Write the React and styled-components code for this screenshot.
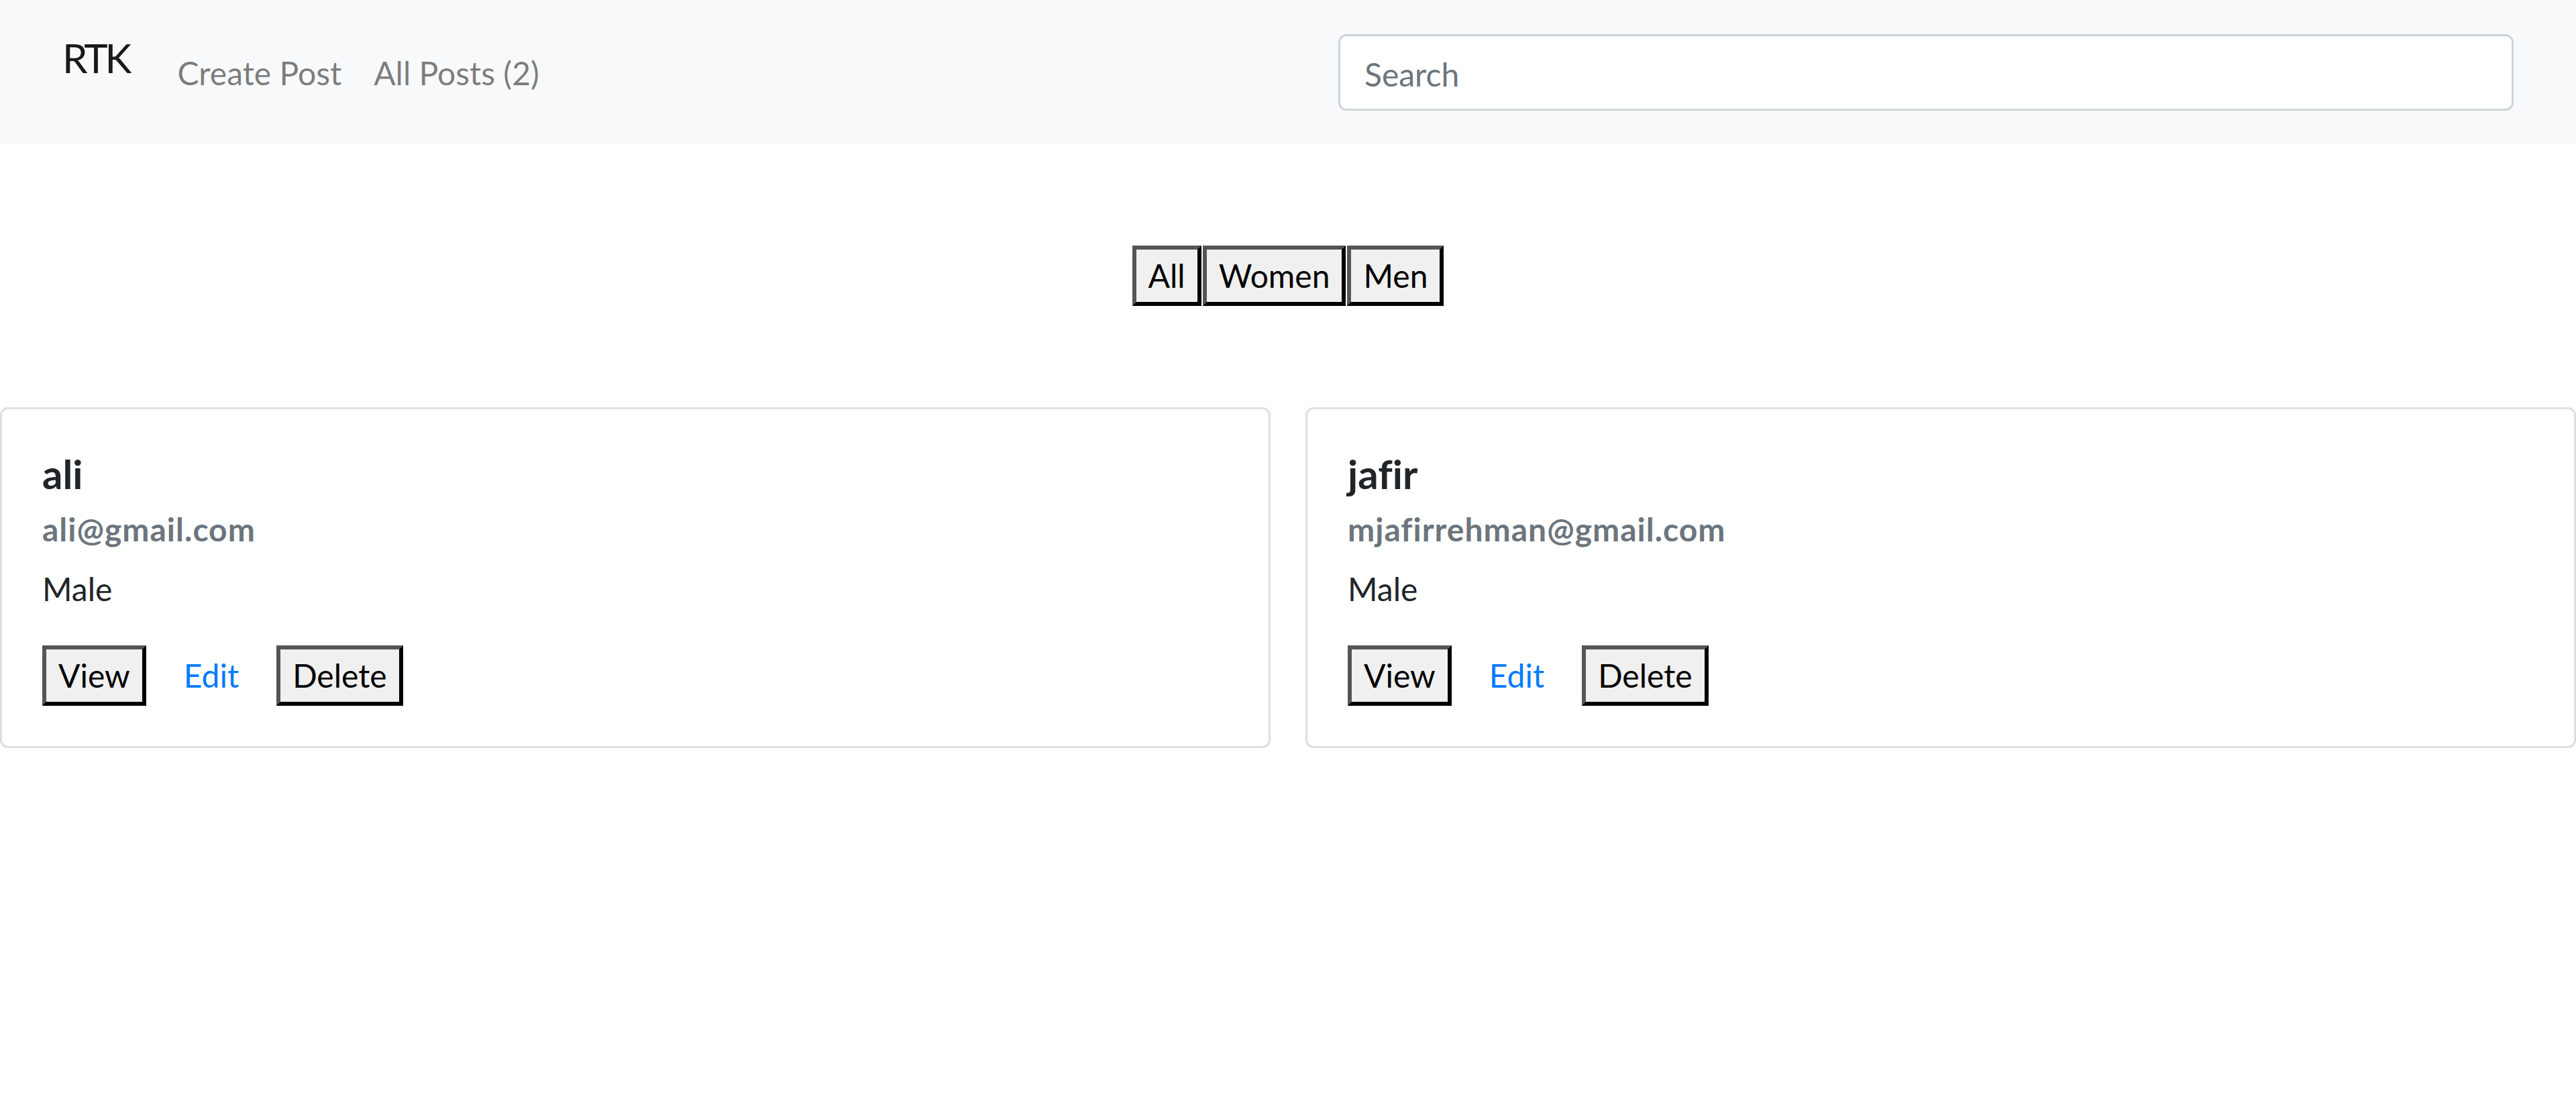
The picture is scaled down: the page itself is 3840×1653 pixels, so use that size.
import styled, { createGlobalStyle } from 'styled-components';

const GlobalStyle = createGlobalStyle`
  body {
    margin: 0;
    background: #ffffff;
    font-family: Lato, "Liberation Sans", sans-serif;
    font-variant-ligatures: none;
    color: #212529;
  }
  * {
    box-sizing: border-box;
  }
`;

const posts = [
  { id: 1, name: 'ali', email: 'ali@gmail.com', gender: 'Male' },
  { id: 2, name: 'jafir', email: 'mjafirrehman@gmail.com', gender: 'Male' },
];

const App = () => {
  return (
    <>
      <GlobalStyle />
      <Navbar>
        <Brand href="#">RTK</Brand>
        <NavList>
          <li><NavLink href="#">Create Post</NavLink></li>
          <li><NavLink href="#">All Posts ({posts.length})</NavLink></li>
        </NavList>
        <SearchForm>
          <SearchInput type="search" placeholder="Search" />
        </SearchForm>
      </Navbar>

      <FilterBar>
        <PlainButton>All</PlainButton>
        <PlainButton>Women</PlainButton>
        <PlainButton>Men</PlainButton>
      </FilterBar>

      <CardGrid>
        {posts.map((post) => (
          <Card key={post.id}>
            <CardTitle>{post.name}</CardTitle>
            <CardSubtitle>{post.email}</CardSubtitle>
            <CardText>{post.gender}</CardText>
            <Actions>
              <PlainButton>View</PlainButton>
              <EditLink href="#">Edit</EditLink>
              <PlainButton>Delete</PlainButton>
            </Actions>
          </Card>
        ))}
      </CardGrid>
    </>
  );
};

export default App;

const Navbar = styled.nav`
  display: flex;
  align-items: center;
  height: 215px;
  padding: 0 93px;
  background: #f8f9fa;
`;

const Brand = styled.a`
  align-self: flex-start;
  margin: 41px 48px 0 0;
  font-size: 60px;
  line-height: 90px;
  letter-spacing: -4px;
  color: rgba(0, 0, 0, 0.9);
  text-decoration: none;
`;

const NavList = styled.ul`
  align-self: flex-start;
  display: flex;
  margin: 49px 0 0;
  padding: 0;
  list-style: none;
`;

const NavLink = styled.a`
  display: block;
  padding: 24px;
  font-size: 48px;
  line-height: 72px;
  color: rgba(0, 0, 0, 0.5);
  text-decoration: none;
`;

const SearchForm = styled.form`
  margin-left: auto;
`;

const SearchInput = styled.input`
  display: block;
  width: 1752px;
  height: 114px;
  padding: 21px 36px 15px;
  border: 3px solid #ced4da;
  border-radius: 12px;
  background: #ffffff;
  font-family: inherit;
  font-size: 48px;
  line-height: 72px;
  color: #495057;
  outline: none;

  &::placeholder {
    color: #6c757d;
  }
`;

const FilterBar = styled.div`
  display: flex;
  justify-content: center;
  gap: 2px;
  padding: 151px 0;
`;

const PlainButton = styled.button`
  margin: 0;
  padding: 3px 18px;
  border-width: 6px;
  border-style: solid;
  border-color: #555555 #000000 #000000 #555555;
  background: #f0f0f0;
  font-family: inherit;
  font-size: 48px;
  line-height: 72px;
  color: #000000;
`;

const CardGrid = styled.div`
  display: grid;
  grid-template-columns: 1fr 1fr;
  column-gap: 52px;
`;

const Card = styled.div`
  padding: 60px;
  border: 3px solid rgba(0, 0, 0, 0.125);
  border-radius: 12px;
  background: #ffffff;
`;

const CardTitle = styled.h5`
  margin: 0 0 36px;
  font-size: 60px;
  font-weight: 700;
  line-height: 72px;
  color: #212529;
`;

const CardSubtitle = styled.h6`
  margin: -18px 0 24px;
  font-size: 48px;
  font-weight: 700;
  line-height: 57.6px;
  letter-spacing: 1px;
  color: #6c757d;
`;

const CardText = styled.p`
  margin: 0 0 48px;
  font-size: 48px;
  line-height: 72px;
  color: #212529;
`;

const Actions = styled.div`
  display: flex;
  align-items: center;
`;

const EditLink = styled.a`
  margin: 0 56px 0 56px;
  font-size: 48px;
  line-height: 72px;
  color: #007bff;
  text-decoration: none;
`;
